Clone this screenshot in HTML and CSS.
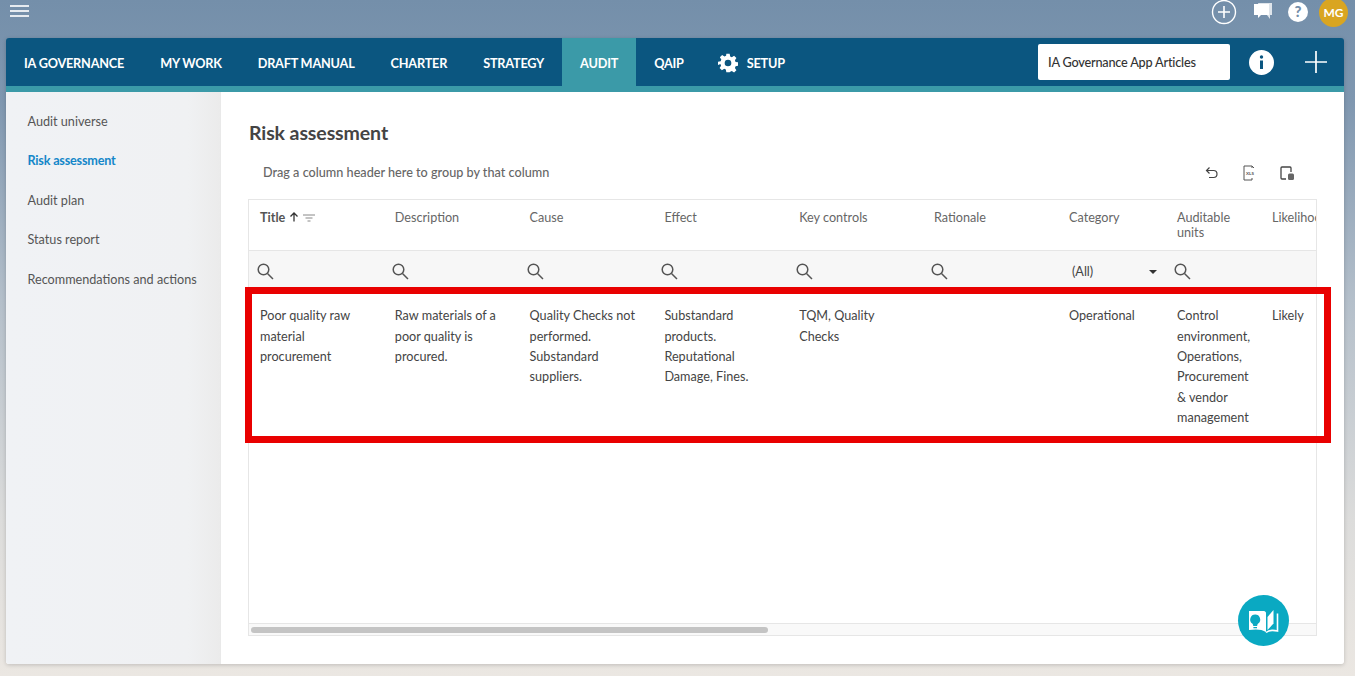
FILE: index.html
```html
<!doctype html>
<html lang="en">
  <head>
    <meta charset="UTF-8" />
    <meta name="viewport" content="width=device-width, initial-scale=1.0" />
    <title>Risk assessment</title>
    <link rel="stylesheet" href="styles.css">
  </head>
  <body>
    <header class="topbar">
      <div class="burger"><span></span><span></span><span></span></div>
      <div class="top-icons">
        <svg class="add-circle" width="26" height="26" viewBox="0 0 26 26"><circle cx="13" cy="13" r="11.5" fill="none" stroke="#fff" stroke-width="1.4"/><path d="M13 7v12M7 13h12" stroke="#fff" stroke-width="1.6"/></svg>
        <svg width="20" height="20" viewBox="0 0 20 20"><path d="M5 1h14v12h-2v4l-3-4H8z" fill="#dfe5eb"/><path d="M1 2h15v11H8l-3 3v-3H1z" fill="#fff"/></svg>
        <svg class="help" width="20" height="20" viewBox="0 0 20 20"><circle cx="10" cy="10" r="10" fill="#fff"/><text x="10" y="15" text-anchor="middle" class="help-mark">?</text></svg>
        <div class="avatar">MG</div>
      </div>
    </header>

    <div class="card">
      <nav class="nav">
        <a>IA GOVERNANCE</a>
        <a>MY WORK</a>
        <a>DRAFT MANUAL</a>
        <a>CHARTER</a>
        <a>STRATEGY</a>
        <a class="active">AUDIT</a>
        <a>QAIP</a>
        <a class="setup">
          <svg width="20" height="20" viewBox="0 0 24 24"><path fill="#fff" fill-rule="evenodd" d="M10 1h4l.6 3.2 2 .8L19.300 3.200l2.800 2.800-1.800 2.700.8 2 3.200.6v4l-3.200.6-.8 2 1.800 2.700-2.800 2.800-2.700-1.800-2 .8L14 23h-4l-.6-3.200-2-.8-2.700 1.800-2.800-2.800 1.800-2.700-.8-2L0 14.400v-4l3.200-.6.8-2L2.200 5.100 5 2.300l2.700 1.800 2-.8zM12 8a4 4 0 1 0 0 8 4 4 0 0 0 0-8z"/></svg>
          SETUP
        </a>
        <div class="nav-right">
          <div class="articles">IA Governance App Articles</div>
          <svg width="25" height="25" viewBox="0 0 25 25"><circle cx="12.500" cy="12.500" r="12.500" fill="#fff"/><circle cx="12.500" cy="7" r="1.700" fill="#0b5680"/><path d="M12.500 10.500v8.500" stroke="#0b5680" stroke-width="3"/></svg>
          <svg class="nav-plus" width="24" height="24" viewBox="0 0 24 24"><path d="M12 1v22M1 12h22" stroke="#fff" stroke-width="1.700"/></svg>
        </div>
      </nav>
      <div class="strip"></div>

      <div class="body">
        <aside class="side">
          <a>Audit universe</a>
          <a class="current">Risk assessment</a>
          <a>Audit plan</a>
          <a>Status report</a>
          <a>Recommendations and actions</a>
        </aside>

        <main class="main">
          <h1>Risk assessment</h1>
          <div class="toolbar">
            <span class="group-hint">Drag a column header here to group by that column</span>
            <div class="tools">
              <svg width="14" height="14" viewBox="0 0 14 14"><path d="M4.500 1.500 1.500 4.500l3 3M1.500 4.500h7a3.500 3.500 0 0 1 0 7H4" fill="none" stroke="#444" stroke-width="1.200"/></svg>
              <svg width="14" height="16" viewBox="0 0 14 16"><path d="M10 3V1H2v14h8v-2M10 1l2 2" fill="none" stroke="#555" stroke-width="1"/><text x="8" y="10" class="xls">XLS</text></svg>
              <svg width="16" height="16" viewBox="0 0 16 16"><path d="M7 14H3a1 1 0 0 1-1-1V3a1 1 0 0 1 1-1h8a1 1 0 0 1 1 1v4" fill="none" stroke="#444" stroke-width="1.300"/><rect x="9" y="8.500" width="6" height="6.500" rx="1.500" fill="#666"/></svg>
            </div>
          </div>

          <div class="grid">
            <div class="row head">
              <div class="cell title-col">Title
                <svg width="10" height="10" viewBox="0 0 10 10"><path d="M5 9.500V1M1.500 4.500 5 1l3.500 3.500" fill="none" stroke="#333" stroke-width="1.300"/></svg>
                <svg width="12" height="8" viewBox="0 0 12 8"><path d="M0 1h12M2.500 4h7M4.500 7h3" stroke="#888" stroke-width="1"/></svg>
              </div>
              <div class="cell">Description</div>
              <div class="cell">Cause</div>
              <div class="cell">Effect</div>
              <div class="cell">Key controls</div>
              <div class="cell">Rationale</div>
              <div class="cell">Category</div>
              <div class="cell">Auditable units</div>
              <div class="cell">Likelihood</div>
            </div>

            <div class="row filters">
              <div class="cell"><svg class="lens" viewBox="0 0 17 17"><circle cx="6.500" cy="6.500" r="5.300"/><path d="m10.500 10.500 5.500 5.500"/></svg></div>
              <div class="cell"><svg class="lens" viewBox="0 0 17 17"><circle cx="6.500" cy="6.500" r="5.300"/><path d="m10.500 10.500 5.500 5.500"/></svg></div>
              <div class="cell"><svg class="lens" viewBox="0 0 17 17"><circle cx="6.500" cy="6.500" r="5.300"/><path d="m10.500 10.500 5.500 5.500"/></svg></div>
              <div class="cell"><svg class="lens" viewBox="0 0 17 17"><circle cx="6.500" cy="6.500" r="5.300"/><path d="m10.500 10.500 5.500 5.500"/></svg></div>
              <div class="cell"><svg class="lens" viewBox="0 0 17 17"><circle cx="6.500" cy="6.500" r="5.300"/><path d="m10.500 10.500 5.500 5.500"/></svg></div>
              <div class="cell"><svg class="lens" viewBox="0 0 17 17"><circle cx="6.500" cy="6.500" r="5.300"/><path d="m10.500 10.500 5.500 5.500"/></svg></div>
              <div class="cell select">(All)<span class="caret"></span></div>
              <div class="cell"><svg class="lens" viewBox="0 0 17 17"><circle cx="6.500" cy="6.500" r="5.300"/><path d="m10.500 10.500 5.500 5.500"/></svg></div>
              <div class="cell"></div>
            </div>

            <div class="row data">
              <div class="cell">Poor quality raw material procurement</div>
              <div class="cell">Raw materials of a poor quality is procured.</div>
              <div class="cell">Quality Checks not performed. Substandard suppliers.</div>
              <div class="cell">Substandard products. Reputational Damage, Fines.</div>
              <div class="cell">TQM, Quality Checks</div>
              <div class="cell"></div>
              <div class="cell">Operational</div>
              <div class="cell">Control environment, Operations, Procurement &amp; vendor management</div>
              <div class="cell">Likely</div>
            </div>

            <div class="filler"></div>
            <div class="scroll"><div class="thumb"></div></div>
          </div>

          <div class="highlight"></div>
          <div class="fab">
            <svg width="34" height="30" viewBox="0 0 34 30">
              <path fill="#fff" d="M2 5h15c1 0 2 1 2 2v19c-4-3-11-3-17-2z"/>
              <path fill="#0aa9c2" d="M8.200 8.500a5 5 0 0 0-3 9c.8.700 1 1.500 1 2.500h4c0-1 .2-1.800 1-2.500a5 5 0 0 0-3-9zM6.400 21h3.600v1.300H6.400z"/>
              <path fill="#fff" d="M20.500 11l6-7v13.500l-6 6.500z"/>
              <path fill="none" stroke="#fff" stroke-width="1.600" d="M30.500 7.500V25c-4-1-8.500-1-11.500 1.500"/>
            </svg>
          </div>
        </main>
      </div>
    </div>
  </body>
</html>
```

FILE: styles.css
```css
html, body {
  height: 100%;
}
body {
  margin: 0;
  overflow: hidden;
  font-family: Lato, 'Open Sans', sans-serif;
  font-size: 12.650px;
  color: #444;
  background: linear-gradient(#748faa 0, #7f97b0 100px, #b4bfca 300px, #dcdcdb 520px, #ebe7e2 676px);
}
.topbar {
  height: 38px;
  display: flex;
  justify-content: space-between;
  align-items: flex-start;
}
.burger {
  margin: 5px 0 0 10px;
  width: 19px;
}
.burger span {
  display: block;
  height: 2px;
  background: #e6ebf0;
  margin-bottom: 3px;
}
.top-icons {
  display: flex;
  align-items: center;
  gap: 15px;
  margin: -1px 7px 0 0;
  height: 26px;
}
.add-circle {
  margin-right: 1px;
}
.help-mark {
  font-size: 15px;
  font-weight: 900;
  fill: #748faa;
}
.avatar {
  width: 29px;
  height: 29px;
  border-radius: 50%;
  background: #d9a521;
  color: #fff;
  font-size: 12px;
  font-weight: 700;
  text-align: center;
  line-height: 29px;
  margin-left: -4px;
}

.card {
  margin: 0 11px 0 6px;
  height: 626px;
  display: flex;
  flex-direction: column;
  border-radius: 3px;
  overflow: hidden;
  box-shadow: 0 1px 4px rgba(0, 0, 0, 0.18);
}
.nav {
  height: 48px;
  flex: none;
  display: flex;
  align-items: stretch;
  background: #0b5680;
  color: #fff;
  font-size: 12.700px;
  font-weight: 700;
  letter-spacing: -0.2px;
}
.nav a {
  display: flex;
  align-items: center;
  gap: 9px;
  padding: 1px 18px 0;
}
.nav a.active {
  background: #3b9aa8;
}
.nav a.setup {
  padding-left: 16px;
}
.nav-right {
  margin-left: auto;
  display: flex;
  align-items: center;
  gap: 19px;
  padding-right: 16px;
}
.nav-plus {
  margin-left: 11px;
}
.articles {
  width: 192px;
  height: 36px;
  box-sizing: border-box;
  padding: 1px 0 0 10px;
  line-height: 35px;
  background: #fff;
  border-radius: 2px;
  color: #333;
  font-weight: 500;
}
.strip {
  height: 6px;
  flex: none;
  background: #3b9aa8;
}

.body {
  flex: 1;
  display: flex;
  min-height: 0;
  background: #fff;
}
.side {
  width: 215px;
  flex: none;
  box-sizing: border-box;
  padding: 9.500px 0 0 21.500px;
  background: linear-gradient(90deg, #f0f2f5 0, #f0f1f3 85%, #ebebeb 100%);
  border-right: 1px solid #e9e9e9;
}
.side a {
  display: block;
  height: 39.600px;
  line-height: 39.600px;
  color: #555;
}
.side a.current {
  color: #1487c9;
  font-weight: 700;
  letter-spacing: -0.2px;
}

.main {
  flex: 1;
  min-width: 0;
  position: relative;
  padding: 0 27px;
}
h1 {
  margin: 28px 0 0 1px;
  height: 26px;
  line-height: 26px;
  font-size: 19.500px;
  font-weight: 700;
  color: #444;
  letter-spacing: -0.1px;
}
.toolbar {
  display: flex;
  justify-content: space-between;
  align-items: center;
  height: 53px;
  padding: 0 22px 0 15px;
  color: #666;
  font-weight: 500;
}
.tools {
  display: flex;
  align-items: center;
  gap: 23px;
}
.xls {
  font-size: 4.500px;
  font-weight: 700;
  fill: #555;
  text-anchor: middle;
}

.grid {
  height: 437px;
  box-sizing: border-box;
  display: flex;
  flex-direction: column;
  border: 1px solid #e6e6e6;
  overflow: hidden;
}
.row {
  display: grid;
  grid-template-columns: 134.800px 134.800px 134.800px 134.800px 134.800px 135px 108px 95px 80px;
  flex: none;
}
.cell {
  padding: 0 11px;
  min-width: 0;
}
.head {
  height: 51px;
  border-bottom: 1px solid #e6e6e6;
  box-sizing: border-box;
  line-height: 15px;
  color: #666;
}
.head .cell {
  padding-top: 10px;
}
.head .cell:last-child {
  white-space: nowrap;
}
.head .title-col {
  color: #555;
  font-weight: 700;
}
.title-col svg {
  margin-left: 1px;
}
.filters {
  height: 41px;
  background: #f7f7f7;
  align-items: center;
}
.filters .cell {
  padding-left: 8px;
  display: flex;
  align-items: center;
}
.lens {
  width: 17px;
  height: 17px;
  fill: none;
  stroke: #555;
  stroke-width: 1.500;
}
.filters .select {
  justify-content: space-between;
  padding: 0 12px 0 14px;
  color: #444;
}
.caret {
  border-top: 4px solid #333;
  border-left: 4px solid transparent;
  border-right: 4px solid transparent;
  margin-right: -3px;
}
.data {
  padding-top: 14.400px;
  line-height: 20.300px;
  color: #444;
}
.filler {
  flex: 1;
}
.scroll {
  height: 8px;
  flex: none;
  border-top: 1px solid #e6e6e6;
  background: #f9f9f9;
  padding: 3px 0 0 2px;
}
.thumb {
  width: 517px;
  height: 6px;
  border-radius: 3px;
  background: #c4c4c4;
}

.highlight {
  position: absolute;
  left: 24px;
  top: 195px;
  width: 1086px;
  height: 156px;
  box-sizing: border-box;
  border: 7px solid #e90000;
}
.fab {
  position: absolute;
  left: 1017px;
  top: 503px;
  width: 51px;
  height: 51px;
  border-radius: 50%;
  background: #0aa9c2;
  display: flex;
  align-items: center;
  justify-content: center;
}
```
